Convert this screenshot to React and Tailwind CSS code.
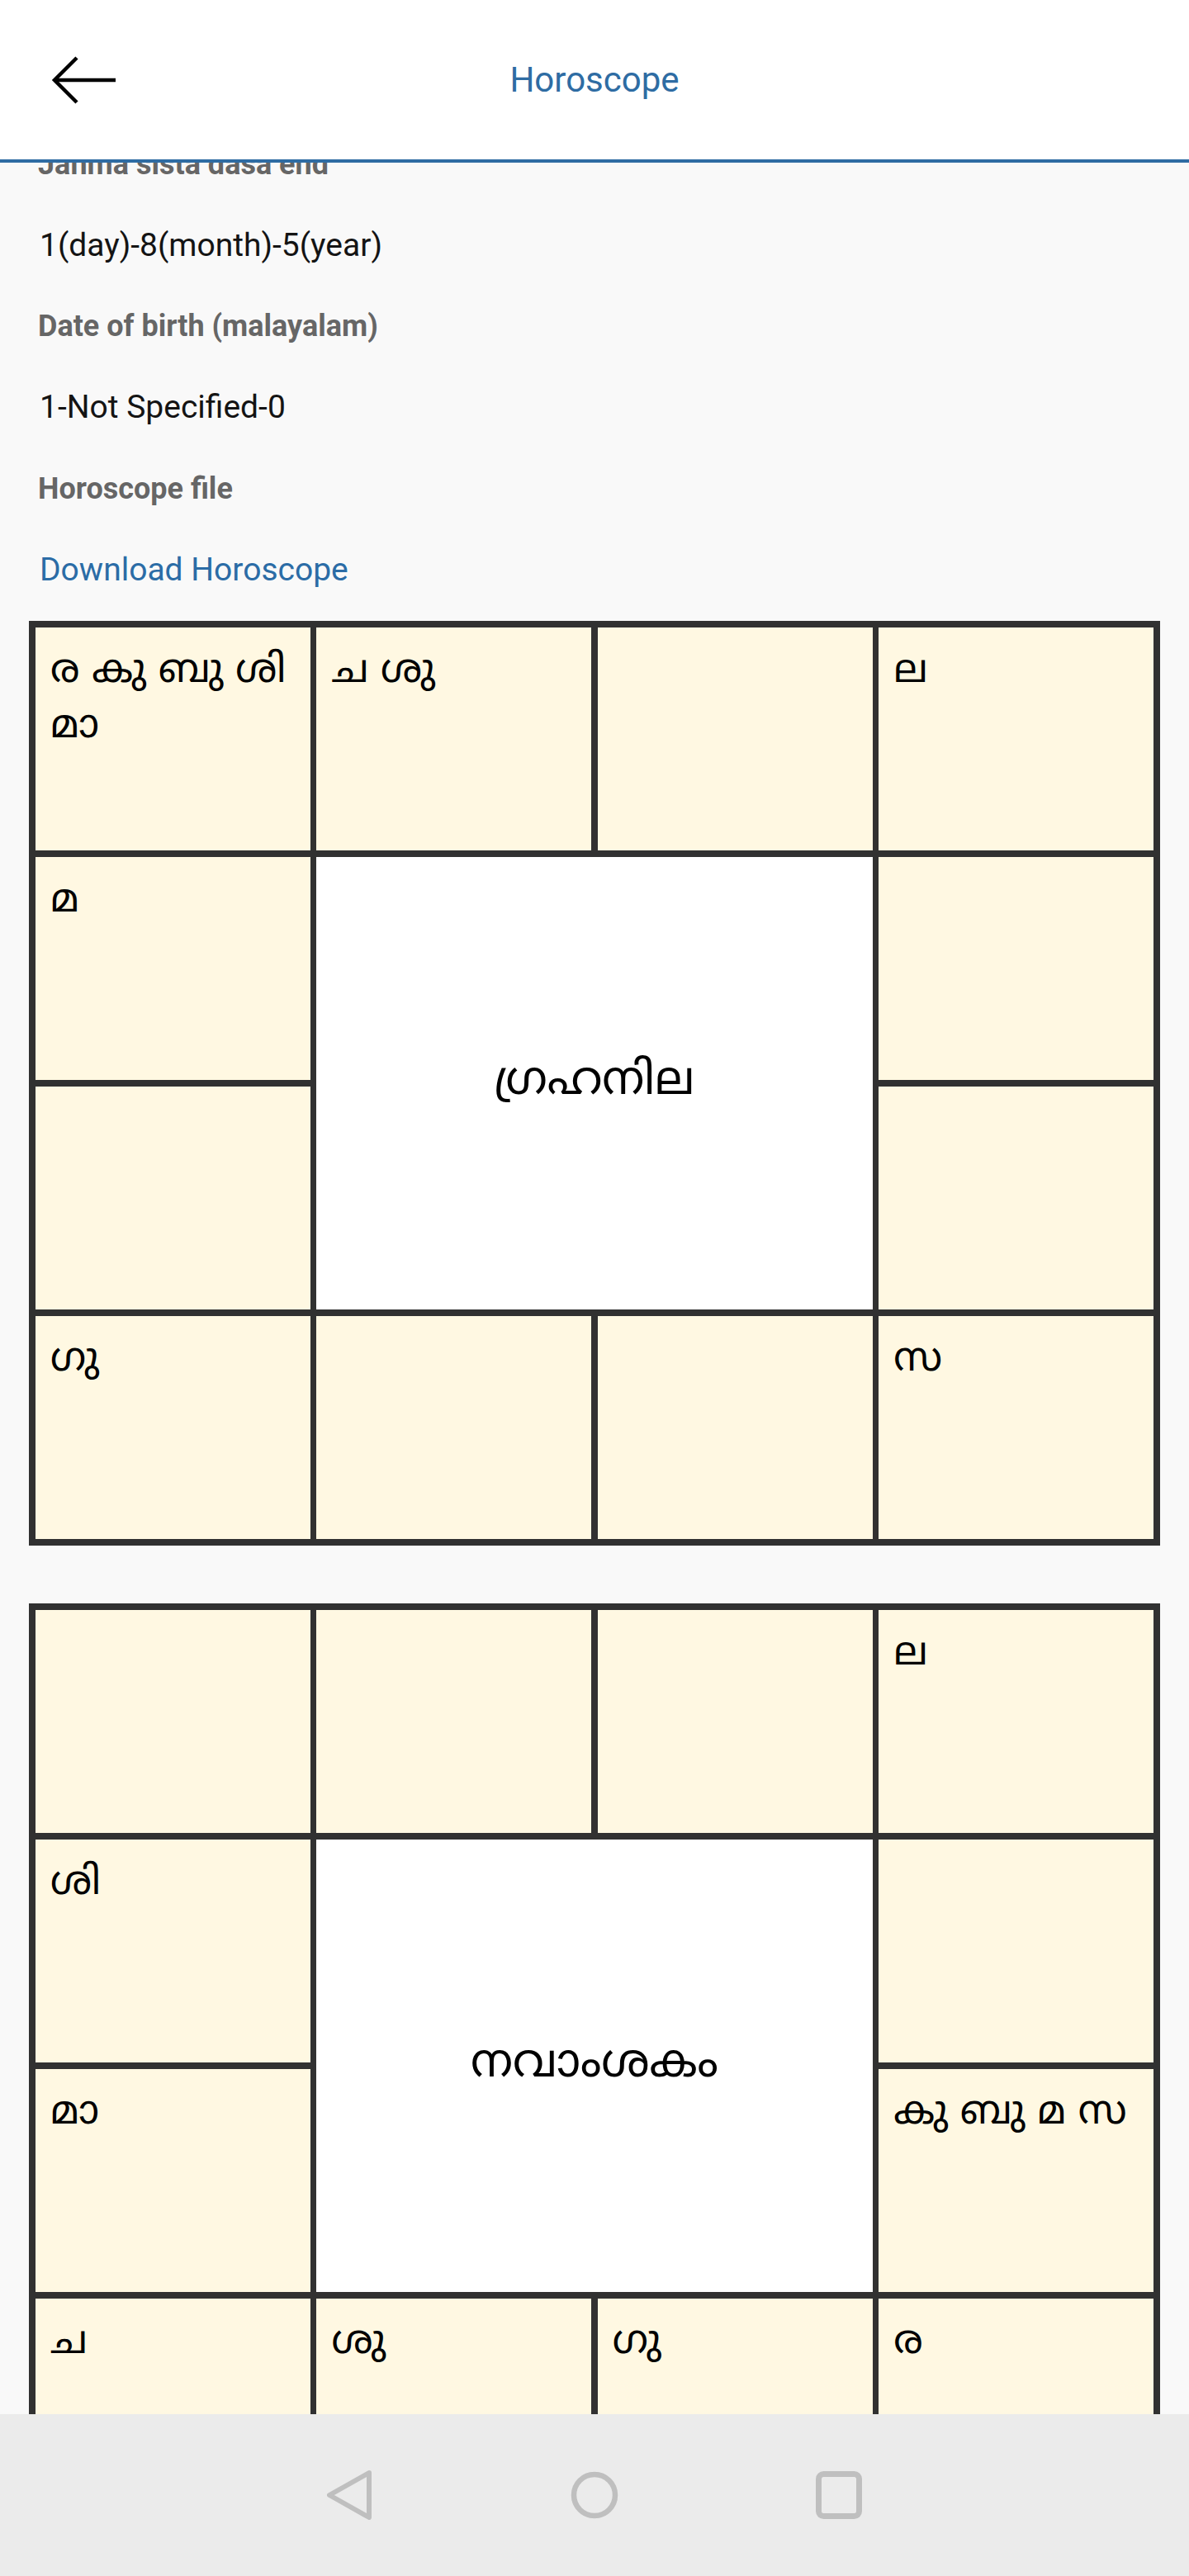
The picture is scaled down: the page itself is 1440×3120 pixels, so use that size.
import React from "react";

const ML = { fontFamily: '"Noto Sans Malayalam", "Noto Sans", "DejaVu Sans", sans-serif' };

function Cell({ text }) {
  return (
    <div className="bg-[#fff8e2] px-[18px] pt-[21px] text-[48px] leading-[67px] text-black" style={ML}>
      {text}
    </div>
  );
}

function Chart({ cells, center }) {
  // cells: 12 entries in order: top row (4), left r2, right r2, left r3, right r3, bottom row (4)
  const [t0, t1, t2, t3, l2, r2, l3, r3, b0, b1, b2, b3] = cells;
  return (
    <div className="grid w-[1370px] grid-cols-4 grid-rows-[270px_270px_270px_270px] gap-x-[7.5px] gap-y-[8px] bg-[#313131] p-[8px]">
      <Cell text={t0} />
      <Cell text={t1} />
      <Cell text={t2} />
      <Cell text={t3} />
      <Cell text={l2} />
      <div className="col-span-2 row-span-2 flex items-center justify-center bg-white text-[56px] text-black" style={ML}>
        {center}
      </div>
      <Cell text={r2} />
      <Cell text={l3} />
      <Cell text={r3} />
      <Cell text={b0} />
      <Cell text={b1} />
      <Cell text={b2} />
      <Cell text={b3} />
    </div>
  );
}

function Label({ children }) {
  return (
    <div className="flex h-[98.2px] items-center pl-[46px] text-[36px] font-bold text-[#666666]">
      {children}
    </div>
  );
}

function Value({ children, link }) {
  return (
    <div className={`flex h-[98.2px] items-center pl-[48px] text-[39px] ${link ? "text-[#2b6ca6]" : "text-[#141414]"}`}>
      {children}
    </div>
  );
}

export default function App() {
  return (
    <div className="flex h-[3120px] w-[1440px] flex-col overflow-hidden bg-[#f9f9f9] font-['Roboto',sans-serif]">
      <header className="relative z-10 flex h-[197px] shrink-0 items-center border-b-4 border-[#2e6ca3] bg-white">
        <div className="flex w-[200px] items-center pl-[62px]">
          <svg width="80" height="58" viewBox="0 0 80 58" fill="none" stroke="#000" strokeWidth="4.5">
            <path d="M4 29 H78" />
            <path d="M31 2 L4 29 L31 56" />
          </svg>
        </div>
        <div className="flex-1 text-center text-[42px] text-[#2e6ca3]">Horoscope</div>
        <div className="w-[200px]" />
      </header>

      <main className="min-h-0 flex-1 overflow-hidden">
        <div className="-mt-[47px] flex flex-col">
          <Label>Janma sista dasa end</Label>
          <Value>1(day)-8(month)-5(year)</Value>
          <Label>Date of birth (malayalam)</Label>
          <Value>1-Not Specified-0</Value>
          <Label>Horoscope file</Label>
          <Value link>Download Horoscope</Value>
          <div className="mt-[13px] flex flex-col gap-[70px] px-[35px]">
            <Chart
              center="ഗ്രഹനില"
              cells={["ര കു ബു ശി മാ", "ച ശു", "", "ല", "മ", "", "", "", "ഗു", "", "", "സ"]}
            />
            <Chart
              center="നവാംശകം"
              cells={["", "", "", "ല", "ശി", "", "മാ", "കു ബു മ സ", "ച", "ശു", "ഗു", "ര"]}
            />
          </div>
        </div>
      </main>

      <nav className="flex h-[196px] shrink-0 items-center justify-center gap-[238px] bg-[#ebebeb]">
        <svg width="58" height="60" viewBox="0 0 58 60" fill="none" stroke="#bfbfbf" strokeWidth="6" strokeLinejoin="round">
          <path d="M52 3 L4 30 L52 57 Z" />
        </svg>
        <svg width="58" height="60" viewBox="0 0 58 60" fill="none" stroke="#bfbfbf" strokeWidth="6.5">
          <circle cx="29" cy="30" r="25" />
        </svg>
        <svg width="58" height="60" viewBox="0 0 58 60" fill="none" stroke="#bfbfbf" strokeWidth="7">
          <rect x="4.5" y="4.5" width="49" height="51" rx="6" />
        </svg>
      </nav>
    </div>
  );
}
